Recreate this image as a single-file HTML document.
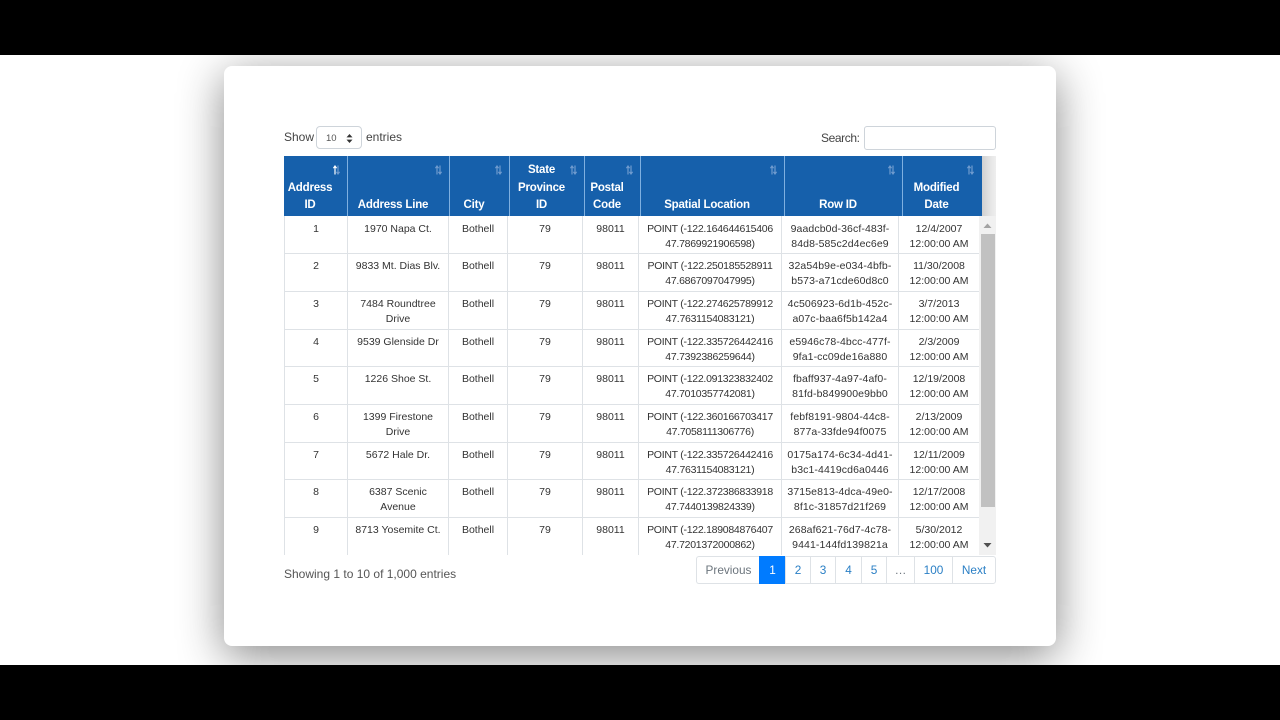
<!DOCTYPE html>
<html><head><meta charset="utf-8">
<style>
html,body{margin:0;padding:0;background:#fff}
body{width:1280px;height:720px;position:relative;overflow:hidden;font-family:"Liberation Sans",sans-serif;color:#212529}
.bar{position:absolute;left:0;width:1280px;background:#000;z-index:5}
.card{position:absolute;left:224px;top:66px;width:832px;height:580px;background:#fff;border-radius:8px;box-shadow:0 10px 45px rgba(0,0,0,.47)}
.abs{position:absolute;white-space:nowrap}
.hd{position:absolute;top:156px;height:60px;background:#1660ab;color:#fff;font-weight:bold;font-size:11.5px;letter-spacing:-.2px;line-height:17.6px;text-align:center;z-index:2;box-sizing:border-box}
.hd span{position:absolute;left:0;right:12px;bottom:1px}
.hd svg{position:absolute;top:9px;right:7px}
.sep{position:absolute;top:156px;height:60px;width:1px;background:#7fb0e0;z-index:3}
#tb{position:absolute;left:284px;top:216px;width:695px;height:339px;overflow:hidden}
table{border-collapse:collapse;table-layout:fixed;width:695px;font-size:10.5px;line-height:15px;color:#333}
td{border:1px solid #dee2e6;border-top:0;padding:5px 2px 0;height:32px;text-align:center;vertical-align:top;box-sizing:content-box;overflow:hidden;white-space:nowrap}
tr.s td{height:31px}
tr.f td{padding-top:6px;height:31px}
td.p{letter-spacing:-.27px}
td.g{letter-spacing:.1px}
.sb{position:absolute;left:979px;top:216px;width:17px;height:339px;background:#f1f1f1}
.th{position:absolute;left:2px;top:18px;width:14px;height:273px;background:#c1c1c1}
.pg{position:absolute;top:556px;height:28px;box-sizing:border-box;border:1px solid #dee2e6;border-right:0;font-size:11.8px;line-height:27px;text-align:center;color:#2a7fc5}
</style></head><body>
<div class="bar" style="top:0;height:55px"></div>
<div class="bar" style="top:665px;height:55px"></div>
<div class="card"></div>

<div class="abs" style="left:284px;top:129px;font-size:12px;line-height:16px;color:#444">Show</div>
<div class="abs" style="left:316px;top:126px;width:44px;height:21px;border:1px solid #ced4da;border-radius:4px;background:#fff;font-size:9.5px;line-height:24px;color:#555;text-indent:9px">10
<svg style="position:absolute;left:29px;top:7px" width="7" height="9" viewBox="0 0 7 9"><path d="M3.5 0L6.5 3.4H.5zM3.5 9L.5 5.6H6.5z" fill="#333"/></svg></div>
<div class="abs" style="left:366px;top:129px;font-size:12px;line-height:16px;color:#444">entries</div>
<div class="abs" style="left:821px;top:130px;font-size:12px;letter-spacing:-.4px;line-height:16px;color:#444">Search:</div>
<div class="abs" style="left:864px;top:126px;width:130px;height:22px;border:1px solid #ced4da;border-radius:3px;background:#fff"></div>

<div class="abs" style="left:982px;top:156px;width:14px;height:60px;background:linear-gradient(90deg,#d0d0d0,#e8e8e8 70%,#eeeeee)"></div>

<div class="hd" style="left:284px;width:64px"><span>Address<br>ID</span><svg width="9" height="10" viewBox="0 0 9 10"><path d="M3 9.5V1.5M1.4 3.2L3 1l1.6 2.2" stroke="#fff" stroke-width="1.2" fill="none"/><path d="M6 .5V8.5M4.4 6.8L6 9l1.6-2.2" stroke="#6f9bce" stroke-width="1.2" fill="none"/></svg></div>
<div class="hd" style="left:348px;width:102px"><span>Address Line</span><svg width="9" height="10" viewBox="0 0 9 10"><path d="M3 9.5V1.5M1.4 3.2L3 1l1.6 2.2M6 .5V8.5M4.4 6.8L6 9l1.6-2.2" stroke="#6f9bce" stroke-width="1.2" fill="none"/></svg></div>
<div class="hd" style="left:450px;width:60px"><span>City</span><svg width="9" height="10" viewBox="0 0 9 10"><path d="M3 9.5V1.5M1.4 3.2L3 1l1.6 2.2M6 .5V8.5M4.4 6.8L6 9l1.6-2.2" stroke="#6f9bce" stroke-width="1.2" fill="none"/></svg></div>
<div class="hd" style="left:510px;width:75px"><span>State<br>Province<br>ID</span><svg width="9" height="10" viewBox="0 0 9 10"><path d="M3 9.5V1.5M1.4 3.2L3 1l1.6 2.2M6 .5V8.5M4.4 6.8L6 9l1.6-2.2" stroke="#6f9bce" stroke-width="1.2" fill="none"/></svg></div>
<div class="hd" style="left:585px;width:56px"><span>Postal<br>Code</span><svg width="9" height="10" viewBox="0 0 9 10"><path d="M3 9.5V1.5M1.4 3.2L3 1l1.6 2.2M6 .5V8.5M4.4 6.8L6 9l1.6-2.2" stroke="#6f9bce" stroke-width="1.2" fill="none"/></svg></div>
<div class="hd" style="left:641px;width:144px"><span>Spatial Location</span><svg width="9" height="10" viewBox="0 0 9 10"><path d="M3 9.5V1.5M1.4 3.2L3 1l1.6 2.2M6 .5V8.5M4.4 6.8L6 9l1.6-2.2" stroke="#6f9bce" stroke-width="1.2" fill="none"/></svg></div>
<div class="hd" style="left:785px;width:118px"><span>Row ID</span><svg width="9" height="10" viewBox="0 0 9 10"><path d="M3 9.5V1.5M1.4 3.2L3 1l1.6 2.2M6 .5V8.5M4.4 6.8L6 9l1.6-2.2" stroke="#6f9bce" stroke-width="1.2" fill="none"/></svg></div>
<div class="hd" style="left:903px;width:79px"><span>Modified<br>Date</span><svg width="9" height="10" viewBox="0 0 9 10"><path d="M3 9.5V1.5M1.4 3.2L3 1l1.6 2.2M6 .5V8.5M4.4 6.8L6 9l1.6-2.2" stroke="#6f9bce" stroke-width="1.2" fill="none"/></svg></div>
<div class="sep" style="left:347px"></div><div class="sep" style="left:449px"></div><div class="sep" style="left:509px"></div><div class="sep" style="left:584px"></div><div class="sep" style="left:640px"></div><div class="sep" style="left:784px"></div><div class="sep" style="left:902px"></div>

<div id="tb"><table>
<colgroup><col style="width:63px"><col style="width:101px"><col style="width:59px"><col style="width:75px"><col style="width:56px"><col style="width:143px"><col style="width:117px"><col style="width:81px"></colgroup>
<tr class="f"><td>1</td><td>1970 Napa Ct.</td><td>Bothell</td><td>79</td><td>98011</td><td class="p">POINT (-122.164644615406<br>47.7869921906598)</td><td class="g">9aadcb0d-36cf-483f-<br>84d8-585c2d4ec6e9</td><td>12/4/2007<br>12:00:00 AM</td></tr>
<tr><td>2</td><td>9833 Mt. Dias Blv.</td><td>Bothell</td><td>79</td><td>98011</td><td class="p">POINT (-122.250185528911<br>47.6867097047995)</td><td class="g">32a54b9e-e034-4bfb-<br>b573-a71cde60d8c0</td><td>11/30/2008<br>12:00:00 AM</td></tr>
<tr><td>3</td><td>7484 Roundtree<br>Drive</td><td>Bothell</td><td>79</td><td>98011</td><td class="p">POINT (-122.274625789912<br>47.7631154083121)</td><td class="g">4c506923-6d1b-452c-<br>a07c-baa6f5b142a4</td><td>3/7/2013<br>12:00:00 AM</td></tr>
<tr class="s"><td>4</td><td>9539 Glenside Dr</td><td>Bothell</td><td>79</td><td>98011</td><td class="p">POINT (-122.335726442416<br>47.7392386259644)</td><td class="g">e5946c78-4bcc-477f-<br>9fa1-cc09de16a880</td><td>2/3/2009<br>12:00:00 AM</td></tr>
<tr><td>5</td><td>1226 Shoe St.</td><td>Bothell</td><td>79</td><td>98011</td><td class="p">POINT (-122.091323832402<br>47.7010357742081)</td><td class="g">fbaff937-4a97-4af0-<br>81fd-b849900e9bb0</td><td>12/19/2008<br>12:00:00 AM</td></tr>
<tr><td>6</td><td>1399 Firestone<br>Drive</td><td>Bothell</td><td>79</td><td>98011</td><td class="p">POINT (-122.360166703417<br>47.7058111306776)</td><td class="g">febf8191-9804-44c8-<br>877a-33fde94f0075</td><td>2/13/2009<br>12:00:00 AM</td></tr>
<tr class="s"><td>7</td><td>5672 Hale Dr.</td><td>Bothell</td><td>79</td><td>98011</td><td class="p">POINT (-122.335726442416<br>47.7631154083121)</td><td class="g">0175a174-6c34-4d41-<br>b3c1-4419cd6a0446</td><td>12/11/2009<br>12:00:00 AM</td></tr>
<tr><td>8</td><td>6387 Scenic<br>Avenue</td><td>Bothell</td><td>79</td><td>98011</td><td class="p">POINT (-122.372386833918<br>47.7440139824339)</td><td class="g">3715e813-4dca-49e0-<br>8f1c-31857d21f269</td><td>12/17/2008<br>12:00:00 AM</td></tr>
<tr><td>9</td><td>8713 Yosemite Ct.</td><td>Bothell</td><td>79</td><td>98011</td><td class="p">POINT (-122.189084876407<br>47.7201372000862)</td><td class="g">268af621-76d7-4c78-<br>9441-144fd139821a</td><td>5/30/2012<br>12:00:00 AM</td></tr>
</table></div>

<div class="sb"><div class="th"></div>
<svg style="position:absolute;left:4px;top:7px" width="9" height="6" viewBox="0 0 9 6"><path d="M4.5 0.5L8.5 5H.5z" fill="#a3a3a3"/></svg>
<svg style="position:absolute;left:4px;top:326px" width="9" height="6" viewBox="0 0 9 6"><path d="M4.5 5.5L.5 1H8.5z" fill="#505050"/></svg>
</div>

<div class="abs" style="left:284px;top:566px;font-size:12px;line-height:16px;color:#555">Showing 1 to 10 of 1,000 entries</div>

<div class="pg" style="left:696px;width:64px;border-radius:3px 0 0 3px;color:#6c757d">Previous</div>
<div class="pg" style="left:759px;width:26px;background:#007bff;border-color:#007bff;color:#fff">1</div>
<div class="pg" style="left:785px;width:25px">2</div>
<div class="pg" style="left:810px;width:25px">3</div>
<div class="pg" style="left:835px;width:26px">4</div>
<div class="pg" style="left:861px;width:25px">5</div>
<div class="pg" style="left:886px;width:28px;color:#6c757d">…</div>
<div class="pg" style="left:914px;width:38px">100</div>
<div class="pg" style="left:952px;width:44px;border-right:1px solid #dee2e6;border-radius:0 3px 3px 0">Next</div>
</body></html>
